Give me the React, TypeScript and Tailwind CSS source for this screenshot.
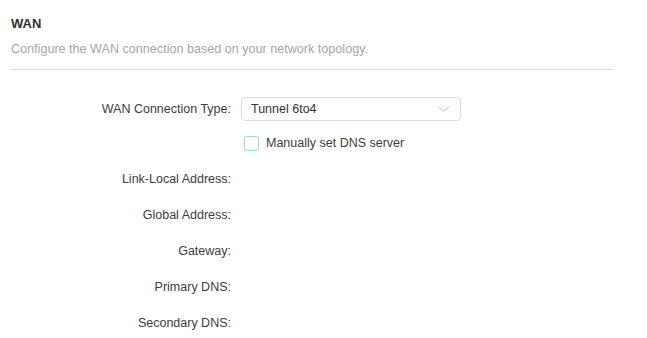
import React from 'react';

const rows = ['Link-Local Address:', 'Global Address:', 'Gateway:', 'Primary DNS:', 'Secondary DNS:'];

export default function App() {
  return (
    <div className="min-h-screen bg-white font-['Liberation_Sans',Arial,sans-serif] text-[#3d3d3d]">
      <div className="pl-[11px] pr-[33px] pt-[16px]">
        {/* Header */}
        <h2 className="text-[13px] font-bold leading-[16px] text-[#2f3133]">WAN</h2>
        <p className="mt-[9px] text-[12.6px] leading-[16px] text-[#a6a6a6]">
          Configure the WAN connection based on your network topology.
        </p>
        <div className="mt-[12px] h-px bg-[#dcdcdc]" />
      </div>

      {/* Form */}
      <div className="flex flex-col pt-[27px] text-[12.5px]">
        <div className="flex h-[24px] items-center">
          <label className="w-[231px] text-right">WAN Connection Type:</label>
          <div className="ml-[10px] flex h-[24px] w-[220px] items-center justify-between rounded-[4px] border border-[#dcdcdc] pl-[9px] pr-[10px] text-[#333]">
            <span>Tunnel 6to4</span>
            <svg width="13" height="6" viewBox="0 0 13 6" fill="none">
              <path d="M0.5 0.5 L6.5 5.2 L12.5 0.5" stroke="#c4c4c4" strokeWidth="1" />
            </svg>
          </div>
        </div>

        <div className="mt-[12px] flex h-[20px] items-center pl-[244px]">
          <span className="h-[15px] w-[15px] rounded-[3px] border-[1.5px] border-[#9fd6dc] bg-white" />
          <span className="ml-[7px] text-[#3d3d3d]">Manually set DNS server</span>
        </div>

        <div className="mt-[8px] flex flex-col">
          {rows.map((r) => (
            <div key={r} className="flex h-[36px] items-center">
              <label className="w-[231px] text-right">{r}</label>
            </div>
          ))}
        </div>
      </div>
    </div>
  );
}
